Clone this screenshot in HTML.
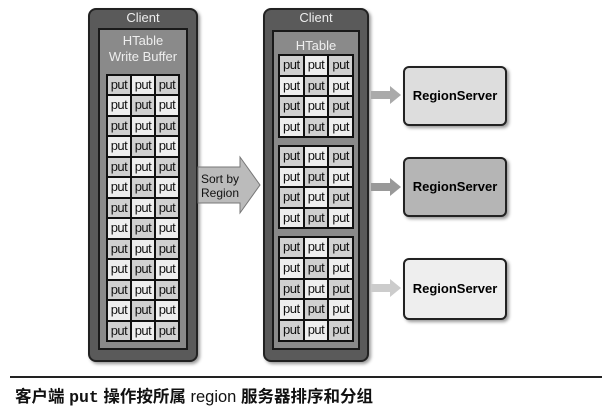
<!DOCTYPE html>
<html><head><meta charset="utf-8"><style>
body{margin:0;width:602px;height:409px;background:#fff;position:relative;overflow:hidden;font-family:"Liberation Sans",sans-serif}
.a{position:absolute}
.client{background:#5a5a5a;border:2px solid #222;border-radius:8px;box-shadow:2px 2px 3px #999}
.ht{background:#8a8a8a;border:2px solid #1a1a1a}
.lbl{color:#eee;font-size:13px;text-align:center;width:100%}
.g{display:grid;grid-template-columns:repeat(3,1fr);gap:2px;background:#111;border:2px solid #111}
.g div{background:#eee;font-size:13px;text-align:center;color:#111;line-height:18px;letter-spacing:-0.5px}
.g div:nth-child(odd){background:#d0d0d0}
.rs{border:2px solid #222;border-radius:6px;box-shadow:2px 2px 3px #999;font-size:13px;font-weight:bold;text-align:center}
</style></head><body>
<div class="a client" style="left:88px;top:8px;width:106px;height:350px"></div>
<div class="a lbl" style="left:88px;top:10px;width:110px">Client</div>
<div class="a ht" style="left:98px;top:28px;width:86px;height:318px"></div>
<div class="a lbl" style="left:98px;top:33px;width:90px;line-height:16px">HTable<br>Write Buffer</div>
<div class="a g" style="left:106px;top:74px;width:70px;height:264px;grid-template-rows:repeat(13,1fr)">
<div>put</div><div>put</div><div>put</div><div>put</div><div>put</div><div>put</div><div>put</div><div>put</div><div>put</div><div>put</div><div>put</div><div>put</div><div>put</div><div>put</div><div>put</div><div>put</div><div>put</div><div>put</div><div>put</div><div>put</div><div>put</div><div>put</div><div>put</div><div>put</div><div>put</div><div>put</div><div>put</div><div>put</div><div>put</div><div>put</div><div>put</div><div>put</div><div>put</div><div>put</div><div>put</div><div>put</div><div>put</div><div>put</div><div>put</div>
</div>

<svg class="a" style="left:196px;top:155px" width="66" height="60"><polygon points="2,12 44,12 44,2 64,30 44,58 44,48 2,48" fill="#bbb" stroke="#777" stroke-width="1"/><text x="24" y="28" font-size="12" text-anchor="middle" font-family="Liberation Sans,sans-serif" fill="#111">Sort by</text><text x="24" y="42" font-size="12" text-anchor="middle" font-family="Liberation Sans,sans-serif" fill="#111">Region</text></svg>

<div class="a client" style="left:263px;top:8px;width:102px;height:350px"></div>
<div class="a lbl" style="left:263px;top:10px;width:106px">Client</div>
<div class="a ht" style="left:272px;top:30px;width:84px;height:316px"></div>
<div class="a lbl" style="left:272px;top:38px;width:88px">HTable</div>
<div class="a g" style="left:278px;top:54px;width:72px;height:80px;grid-template-rows:repeat(4,1fr)">
<div>put</div><div>put</div><div>put</div><div>put</div><div>put</div><div>put</div><div>put</div><div>put</div><div>put</div><div>put</div><div>put</div><div>put</div></div>
<div class="a g" style="left:278px;top:145px;width:72px;height:80px;grid-template-rows:repeat(4,1fr)">
<div>put</div><div>put</div><div>put</div><div>put</div><div>put</div><div>put</div><div>put</div><div>put</div><div>put</div><div>put</div><div>put</div><div>put</div></div>
<div class="a g" style="left:278px;top:236px;width:72px;height:102px;grid-template-rows:repeat(5,1fr)">
<div>put</div><div>put</div><div>put</div><div>put</div><div>put</div><div>put</div><div>put</div><div>put</div><div>put</div><div>put</div><div>put</div><div>put</div><div>put</div><div>put</div><div>put</div></div>

<svg class="a" style="left:370px;top:85px" width="32" height="20"><polygon points="1,6 20,6 20,1 31,10 20,19 20,14 1,14" fill="#aaa"/></svg>
<svg class="a" style="left:370px;top:177px" width="32" height="20"><polygon points="1,6 20,6 20,1 31,10 20,19 20,14 1,14" fill="#999"/></svg>
<svg class="a" style="left:370px;top:278px" width="32" height="20"><polygon points="1,6 20,6 20,1 31,10 20,19 20,14 1,14" fill="#ccc"/></svg>

<div class="a rs" style="left:403px;top:66px;width:100px;height:56px;line-height:56px;background:#ddd">RegionServer</div>
<div class="a rs" style="left:403px;top:157px;width:100px;height:56px;line-height:56px;background:#b5b5b5">RegionServer</div>
<div class="a rs" style="left:403px;top:258px;width:100px;height:58px;line-height:58px;background:#eee">RegionServer</div>

<div class="a" style="left:10px;top:376px;width:592px;height:2px;background:#222"></div>
<div class="a" style="left:15px;top:383px;font-size:16.5px;font-weight:bold;color:#111;font-family:'Liberation Sans','Noto Sans CJK SC',sans-serif;white-space:nowrap">客户端 <span style="font-family:'Liberation Mono',monospace">put</span> 操作按所属 <span style="font-weight:normal">region</span> 服务器排序和分组</div>
</body></html>
